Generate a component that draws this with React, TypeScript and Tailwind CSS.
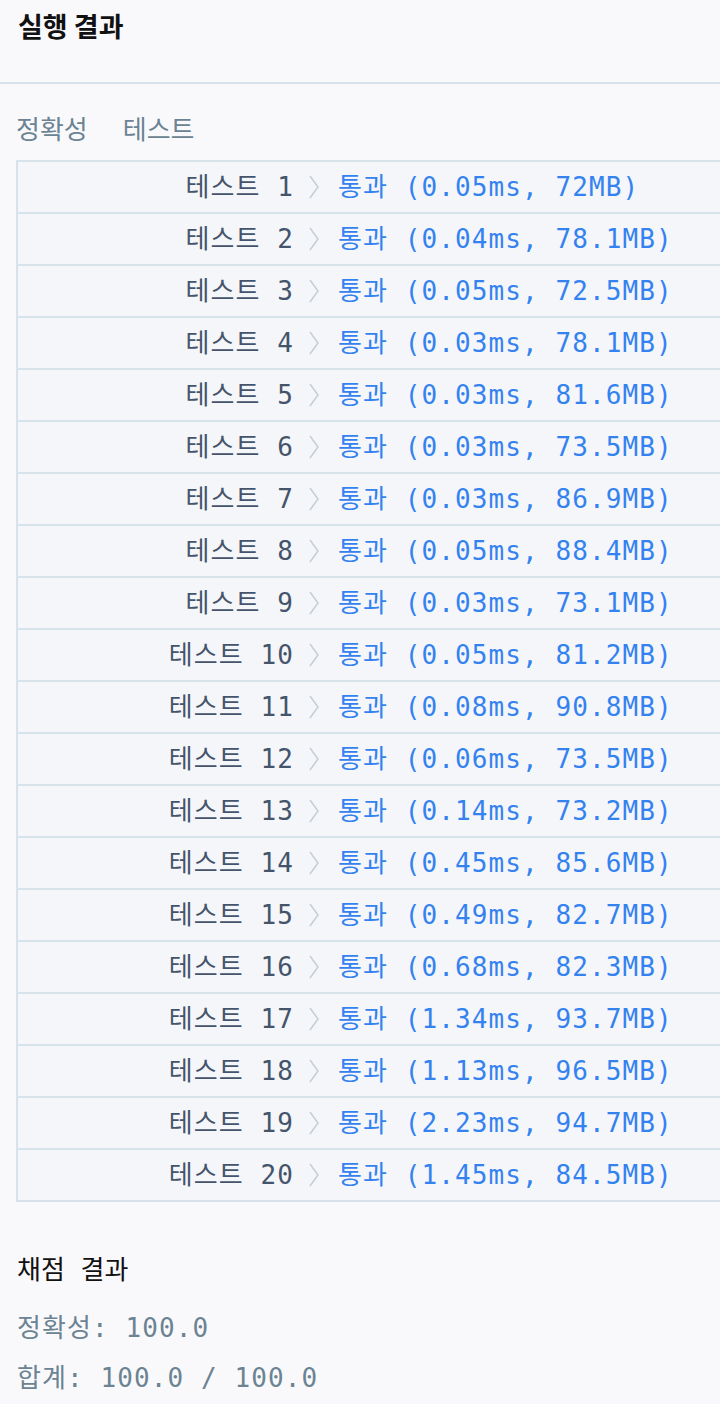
const rows: [number, string][] = [
  [1, "0.05ms, 72MB"],
  [2, "0.04ms, 78.1MB"],
  [3, "0.05ms, 72.5MB"],
  [4, "0.03ms, 78.1MB"],
  [5, "0.03ms, 81.6MB"],
  [6, "0.03ms, 73.5MB"],
  [7, "0.03ms, 86.9MB"],
  [8, "0.05ms, 88.4MB"],
  [9, "0.03ms, 73.1MB"],
  [10, "0.05ms, 81.2MB"],
  [11, "0.08ms, 90.8MB"],
  [12, "0.06ms, 73.5MB"],
  [13, "0.14ms, 73.2MB"],
  [14, "0.45ms, 85.6MB"],
  [15, "0.49ms, 82.7MB"],
  [16, "0.68ms, 82.3MB"],
  [17, "1.34ms, 93.7MB"],
  [18, "1.13ms, 96.5MB"],
  [19, "2.23ms, 94.7MB"],
  [20, "1.45ms, 84.5MB"],
];

const mono = "font-['DejaVu_Sans_Mono','Noto_Sans_CJK_KR',monospace]";

function Chevron() {
  return (
    <svg width="12" height="24" viewBox="0 0 12 24" className="shrink-0">
      <polyline points="2,1 10,12 2,23" fill="none" stroke="#c5cdd5" strokeWidth="1.5" />
    </svg>
  );
}

export default function App() {
  return (
    <div className="min-h-[1404px] w-[720px] overflow-hidden bg-[#f9f9fc] font-['Noto_Sans_CJK_KR',sans-serif]">
      {/* Header */}
      <div className="h-[84px] border-b-2 border-[#d7e2ea] px-[18px] pt-[7px]">
        <h1 className="text-[27px] font-bold leading-[38px] text-[#111]">실행 결과</h1>
      </div>

      {/* Test group */}
      <div className="px-[16px] pt-[26px]">
        <div className="flex gap-[35px] text-[26px] leading-[36px] text-[#6b8392]">
          <span>정확성</span>
          <span>테스트</span>
        </div>

        <div className="mt-[14px] w-[720px] border-b-2 border-l-2 border-[#d7e2ea] bg-[#f5f6fa]">
          {rows.map(([n, res]) => (
            <div
              key={n}
              className={`flex h-[52px] items-center border-t-2 border-[#d7e2ea] ${mono} text-[26px] tracking-[1.1px]`}
            >
              <div className="w-[276px] text-right text-[#44546a]">
                테스트 {n}
              </div>
              <div className="ml-[14px] mr-[18px] flex">
                <Chevron />
              </div>
              <div className="whitespace-nowrap text-[#3482f0]">통과 ({res})</div>
            </div>
          ))}
        </div>
      </div>

      {/* Summary */}
      <div className="px-[17px] pt-[50px]">
        <h2 className={`${mono} text-[26px] leading-[36px] text-[#111]`}>채점 결과</h2>
        <div className={`${mono} mt-[24px] text-[26px] leading-[32px] tracking-[1.1px] text-[#6b8392]`}>
          정확성: 100.0
        </div>
        <div className={`${mono} mt-[18px] text-[26px] leading-[32px] tracking-[1.1px] text-[#6b8392]`}>
          합계: 100.0 / 100.0
        </div>
      </div>
    </div>
  );
}
